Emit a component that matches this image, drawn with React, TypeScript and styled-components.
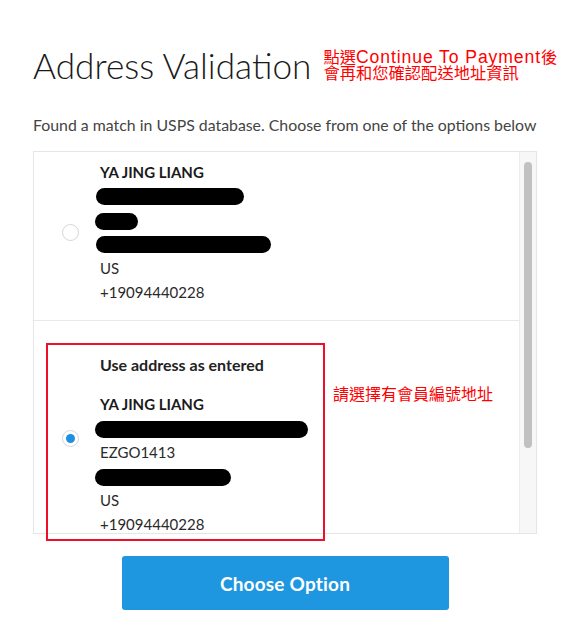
import React from "react";
import styled, { createGlobalStyle } from "styled-components";

const GlobalStyle = createGlobalStyle`
  html, body {
    margin: 0;
    padding: 0;
    background: #ffffff;
  }
  body {
    font-family: Lato, "Noto Sans", "Noto Sans CJK TC", sans-serif;
    color: #222;
  }
`;

const Page = styled.main`
  position: relative;
  width: 504px;
  padding: 43px 0 0 33px;
`;

const Header = styled.header`
  display: flex;
  align-items: center;
  gap: 12px;
`;

const Title = styled.h1`
  margin: 0;
  font-size: 35.2px;
  line-height: 44px;
  font-weight: 300;
  color: #1a1a1a;
  white-space: nowrap;
`;

const Note = styled.div`
  font-family: "Liberation Sans", "Noto Sans CJK TC", sans-serif;
  font-size: 16.3px;
  line-height: 16.5px;
  color: #ff0000;
  white-space: nowrap;
`;

const NoteLatin = styled.span`
  font-size: 17.6px;
  letter-spacing: 0.9px;
`;

const Subtitle = styled.p`
  margin: 28px 0 0;
  font-size: 15.85px;
  line-height: 20px;
  color: #444;
  white-space: nowrap;
`;

const ListBox = styled.section`
  margin-top: 16px;
  height: 383px;
  box-sizing: border-box;
  border: 1px solid #e6e6e6;
  display: flex;
`;

const Options = styled.div`
  flex: 1;
  overflow: hidden;
`;

const ScrollTrack = styled.div`
  flex: none;
  width: 16px;
  background: #f7f7f7;
  border-left: 1px solid #ececec;
  display: flex;
  justify-content: center;
  padding-top: 10px;
`;

const ScrollThumb = styled.div`
  width: 8px;
  height: 286px;
  border-radius: 4px;
  background: #c1c1c1;
`;

const Option = styled.label<{ $pad: string }>`
  display: flex;
  align-items: center;
  gap: 21px;
  padding: ${(p) => p.$pad};
  border-bottom: 1px solid #e8e8e8;
  cursor: pointer;
`;

const Radio = styled.span<{ $checked?: boolean; $lift?: number }>`
  flex: none;
  width: 17px;
  height: 17px;
  box-sizing: border-box;
  border-radius: 50%;
  border: 1px solid #d6d6d6;
  background: #fff;
  margin-bottom: ${(p) => (p.$lift ?? 0) * 2}px;
  display: flex;
  align-items: center;
  justify-content: center;

  &::after {
    content: "";
    width: 9px;
    height: 9px;
    border-radius: 50%;
    background: ${(p) => (p.$checked ? "#1e90e0" : "transparent")};
  }
`;

const Address = styled.div`
  display: flex;
  flex-direction: column;
  font-size: 15px;
  line-height: 24px;
  color: #2a2a2a;
`;

const Heading = styled.div`
  font-size: 16px;
  font-weight: 700;
  color: #222;
  margin-bottom: 15px;
`;

const Name = styled.div`
  font-weight: 700;
  color: #1a1a1a;
`;

const Line = styled.div`
  height: 24px;
  display: flex;
  align-items: center;
`;

const Redaction = styled.span<{ $width: number; $shift?: number }>`
  display: block;
  width: ${(p) => p.$width}px;
  height: 17px;
  border-radius: 9px;
  background: #000;
  margin-left: ${(p) => -4 - (p.$shift ?? 0)}px;
  transform: translateY(${(p) => p.$shift ?? 0}px);
`;

const Highlight = styled.div`
  position: absolute;
  left: 46px;
  top: 343px;
  width: 279px;
  height: 198px;
  box-sizing: border-box;
  border: 2px solid #ee1028;
  pointer-events: none;
`;

const SideNote = styled(Note)`
  position: absolute;
  left: 333px;
  top: 387px;
  font-size: 16px;
`;

const Footer = styled.div`
  display: flex;
  justify-content: center;
  margin-top: 22px;
`;

const ChooseButton = styled.button`
  width: 327px;
  height: 54px;
  border: none;
  border-radius: 3px;
  background: #1e96e0;
  color: #fff;
  font-family: Lato, "Noto Sans", sans-serif;
  font-size: 19px;
  font-weight: 700;
  letter-spacing: 0.2px;
  cursor: pointer;
`;

export default function App() {
  return (
    <>
      <GlobalStyle />
      <Page>
        <Header>
          <Title>Address Validation</Title>
          <div>
            <Note>
              點選<NoteLatin>Continue To Payment</NoteLatin>後
            </Note>
            <Note>會再和您確認配送地址資訊</Note>
          </div>
        </Header>
        <Subtitle>
          Found a match in USPS database. Choose from one of the options below
        </Subtitle>

        <ListBox>
          <Options>
            <Option $pad="8px 20px 16px 28px">
              <Radio />
              <Address>
                <Name>YA JING LIANG</Name>
                <Line>
                  <Redaction $width={148} />
                </Line>
                <Line>
                  <Redaction $width={43} $shift={1} />
                </Line>
                <Line>
                  <Redaction $width={175} />
                </Line>
                <div>US</div>
                <div>+19094440228</div>
              </Address>
            </Option>
            <Option $pad="32px 20px 20px 28px">
              <Radio $checked $lift={6} />
              <Address>
                <Heading>Use address as entered</Heading>
                <Name>YA JING LIANG</Name>
                <Line>
                  <Redaction $width={213} $shift={1} />
                </Line>
                <div>EZGO1413</div>
                <Line>
                  <Redaction $width={136} $shift={1} />
                </Line>
                <div>US</div>
                <div>+19094440228</div>
              </Address>
            </Option>
          </Options>
          <ScrollTrack>
            <ScrollThumb />
          </ScrollTrack>
        </ListBox>

        <Highlight />
        <SideNote>請選擇有會員編號地址</SideNote>

        <Footer>
          <ChooseButton>Choose Option</ChooseButton>
        </Footer>
      </Page>
    </>
  );
}
